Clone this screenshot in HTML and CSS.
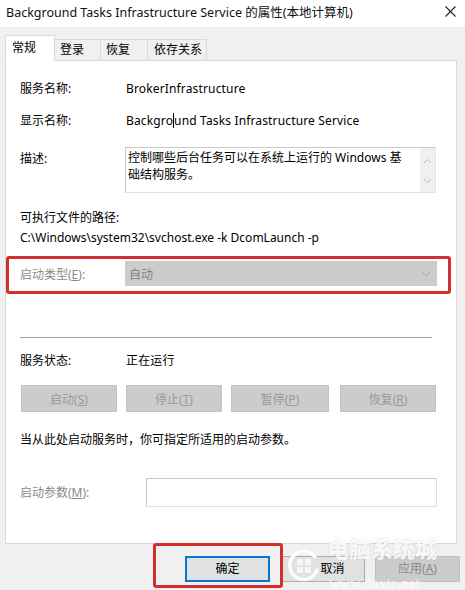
FILE: index.html
```html
<!DOCTYPE html>
<html lang="zh-CN">
<head>
    <meta charset="UTF-8">
    <title>Background Tasks Infrastructure Service 的属性(本地计算机)</title>
    <link rel="stylesheet" href="styles.css">
</head>
<body>
    <div class="window">
        <div class="titlebar">
            <span class="title">Background Tasks Infrastructure Service 的属性(本地计算机)</span>
            <svg class="close" width="11" height="11" viewBox="0 0 11 11">
                <path d="M0.5 0.5 L10.5 10.5 M10.5 0.5 L0.5 10.5" stroke="#222" stroke-width="1.1"/>
            </svg>
        </div>

        <!-- Tabs -->
        <div class="tabs">
            <div class="tab active">常规</div>
            <div class="tab">登录</div>
            <div class="tab">恢复</div>
            <div class="tab">依存关系</div>
        </div>

        <div class="panel">
            <div class="row">
                <span class="label">服务名称:</span>
                <span class="value">BrokerInfrastructure</span>
            </div>
            <div class="row row-display">
                <span class="label">显示名称:</span>
                <span class="value">Backgro<span class="caret"></span>und Tasks Infrastructure Service</span>
            </div>
            <div class="row row-desc">
                <span class="label">描述:</span>
                <div class="desc-box">
                    <div class="desc-text">控制哪些后台任务可以在系统上运行的 Windows 基础结构服务。</div>
                    <div class="scroll">
                        <svg width="9" height="6" viewBox="0 0 9 6"><path d="M1 5 L4.5 1.5 L8 5" fill="none" stroke="#b5b5b5"/></svg>
                        <svg width="9" height="6" viewBox="0 0 9 6"><path d="M1 1 L4.5 4.5 L8 1" fill="none" stroke="#b5b5b5"/></svg>
                    </div>
                </div>
            </div>
            <div class="line exe-label">可执行文件的路径:</div>
            <div class="line">C:\Windows\system32\svchost.exe -k DcomLaunch -p</div>

            <div class="highlight startup">
                <span class="label disabled">启动类型(<u>E</u>):</span>
                <div class="combo">
                    <span>自动</span>
                    <svg width="10" height="6" viewBox="0 0 10 6"><path d="M1 1 L5 5 L9 1" fill="none" stroke="#a8a8a8"/></svg>
                </div>
            </div>

            <div class="separator"></div>

            <div class="row row-status">
                <span class="label">服务状态:</span>
                <span class="value">正在运行</span>
            </div>

            <div class="actions">
                <button class="btn-disabled w96">启动(<u>S</u>)</button>
                <button class="btn-disabled w96">停止(<u>T</u>)</button>
                <button class="btn-disabled w98">暂停(<u>P</u>)</button>
                <button class="btn-disabled w96 last">恢复(<u>R</u>)</button>
            </div>

            <div class="line note">当从此处启动服务时，你可指定所适用的启动参数。</div>

            <div class="row row-param">
                <span class="label disabled">启动参数(<u>M</u>):</span>
                <div class="param-input"></div>
            </div>
        </div>

        <!-- Dialog buttons -->
        <div class="footer">
            <button class="btn-ok">确定</button>
            <button class="btn-normal">取消</button>
            <button class="btn-apply">应用(<u>A</u>)</button>
        </div>

        <div class="mark-ok"></div>

        <!-- Site watermark -->
        <div class="watermark">
            <svg class="wm-logo" width="34" height="34" viewBox="0 0 34 34">
                <path d="M28 9 A14 14 0 1 0 30 22" fill="none" stroke="#fff" stroke-width="3.5" stroke-linecap="round"/>
                <path d="M10 11 h6 v6 h-6 z M18 11 h6 v6 h-6 z M10 19 h6 v6 h-6 z M18 19 h6 v6 h-6 z" fill="#fff" fill-opacity="0.8"/>
            </svg>
            <div class="wm-title">电脑系统城</div>
            <div class="wm-url">www.dnxtc.net</div>
        </div>
    </div>
</body>
</html>
```

FILE: styles.css
```css
* {
    box-sizing: border-box;
    margin: 0;
    padding: 0;
}

body {
    font-family: 'Noto Sans', 'Noto Sans CJK SC', sans-serif;
    font-size: 12px;
    color: #000;
    background-color: #f0f0f0;
}

.window {
    position: relative;
    width: 465px;
    height: 590px;
    overflow: hidden;
    background-color: #f0f0f0;
}

.titlebar {
    height: 27px;
    background-color: #fff;
    display: flex;
    align-items: center;
    justify-content: space-between;
    padding: 0 8px 5px 6px;
}

.title {
    font-size: 12.5px;
    color: #111;
    white-space: nowrap;
}

.close {
    margin-right: 1px;
}

/* Tabs */
.tabs {
    display: flex;
    align-items: flex-end;
    height: 33px;
    padding-left: 5px;
    position: relative;
    z-index: 1;
}

.tab {
    height: 22px;
    padding: 0 5px;
    line-height: 20px;
    white-space: nowrap;
    border: 1px solid #d9d9d9;
    border-left: none;
    background-color: #f0f0f0;
    margin-bottom: -1px;
}

.tab:nth-child(2) { width: 46px; }
.tab:nth-child(3) { width: 47px; }
.tab:nth-child(4) { width: 59px; padding: 0 6px; }

.tab.active {
    width: 50px;
    height: 26px;
    padding: 2px 6px 0;
    background-color: #fff;
    border-left: 1px solid #d9d9d9;
    border-bottom-color: #fff;
    margin-bottom: -1px;
}

.panel {
    margin: 0 8px 0 5px;
    height: 484px;
    background-color: #fff;
    border: 1px solid #d9d9d9;
    padding: 18px 0 0 14px;
}

.row {
    display: flex;
    align-items: flex-start;
    line-height: 20px;
}

.label {
    width: 106px;
    flex-shrink: 0;
    white-space: nowrap;
}

.value {
    white-space: nowrap;
    letter-spacing: 0.15px;
}

.disabled {
    color: #8a8a8a;
}

.row-display {
    margin-top: 12px;
}

.caret {
    display: inline-block;
    width: 1px;
    height: 15px;
    background-color: #000;
    vertical-align: -3px;
}

.row-desc {
    margin-top: 16px;
}

.row-desc .label {
    padding-top: 2px;
    width: 105px;
}

.desc-box {
    width: 311px;
    height: 46px;
    border: 1px solid #c8c8c8;
    border-right-color: #e3e3e3;
    border-bottom-color: #e3e3e3;
    display: flex;
    justify-content: space-between;
}

.desc-text {
    width: 284px;
    padding: 1px 0 0 2px;
    line-height: 17px;
}

.scroll {
    width: 15px;
    background-color: #f0f0f0;
    display: flex;
    flex-direction: column;
    justify-content: space-between;
    align-items: center;
    padding: 10px 0 8px;
}

.line {
    line-height: 20px;
    white-space: nowrap;
}

.exe-label {
    margin-top: 15px;
}

/* Red annotation around the startup type row */
.highlight {
    border: 3px solid #d2302f;
    border-radius: 3px;
}

.startup {
    display: flex;
    align-items: center;
    margin: 8px 0 0 -14px;
    width: 445px;
    height: 38px;
    padding: 0 0 3px 11px;
}

.startup .label {
    width: 105px;
}

.combo {
    width: 312px;
    height: 25px;
    background-color: #cccccc;
    display: flex;
    align-items: center;
    justify-content: space-between;
    padding: 0 6px 0 4px;
    color: #838383;
}

.separator {
    margin-top: 43px;
    width: 412px;
    height: 1px;
    background-color: #a0a0a0;
}

.row-status {
    margin-top: 13px;
}

.actions {
    display: flex;
    margin: 14px 0 0 1px;
    gap: 9px;
}

button {
    font-family: 'Noto Sans', 'Noto Sans CJK SC', sans-serif;
    font-size: 12px;
    height: 27px;
    border: 1px solid #c4c4c4;
    background-color: #cccccc;
    color: #9a9a9a;
}

.w96 { width: 96px; }
.w98 { width: 98px; }
.last { margin-left: 2px; }

.note {
    margin-top: 18px;
}

.row-param {
    margin-top: 28px;
    align-items: center;
}

.row-param .label {
    width: 126px;
}

.param-input {
    width: 291px;
    height: 29px;
    border: 1px solid #c8c8c8;
    border-right-color: #e0e0e0;
    border-bottom-color: #e0e0e0;
}

/* Dialog buttons */
.footer {
    display: flex;
    padding: 12px 0 0 185px;
    gap: 10px;
}

.footer button {
    width: 85px;
    height: 26px;
    line-height: 14px;
}

.btn-ok {
    border: 2px solid #0078d7;
    background-color: #e1e1e1;
    color: #000;
}

.btn-normal {
    border: 1px solid #adadad;
    background-color: #e1e1e1;
    color: #000;
    padding-left: 20px;
}

.btn-apply {
    border: 1px solid #bfbfbf;
    background-color: #cccccc;
    color: #8a8a8a;
}

.mark-ok {
    position: absolute;
    left: 153px;
    top: 543px;
    width: 130px;
    height: 45px;
    border: 3px solid #d2302f;
    border-radius: 3px;
}

.watermark {
    position: absolute;
    left: 287px;
    top: 537px;
    width: 178px;
    height: 53px;
    pointer-events: none;
}

.wm-logo {
    position: absolute;
    left: 0;
    top: 11px;
    opacity: 0.9;
}

.wm-title {
    position: absolute;
    left: 40px;
    top: 0;
    font-family: 'Noto Sans CJK SC', sans-serif;
    font-size: 22px;
    line-height: 20px;
    font-weight: 900;
    color: rgba(255, 255, 255, 0.85);
    letter-spacing: 0;
    text-shadow: 0 0 2px rgba(0, 0, 0, 0.15);
}

.wm-url {
    position: absolute;
    left: 42px;
    top: 41px;
    font-family: 'Liberation Serif', serif;
    font-size: 14px;
    line-height: 11px;
    white-space: nowrap;
    color: rgba(255, 255, 255, 0.8);
    letter-spacing: 0.5px;
}
```
